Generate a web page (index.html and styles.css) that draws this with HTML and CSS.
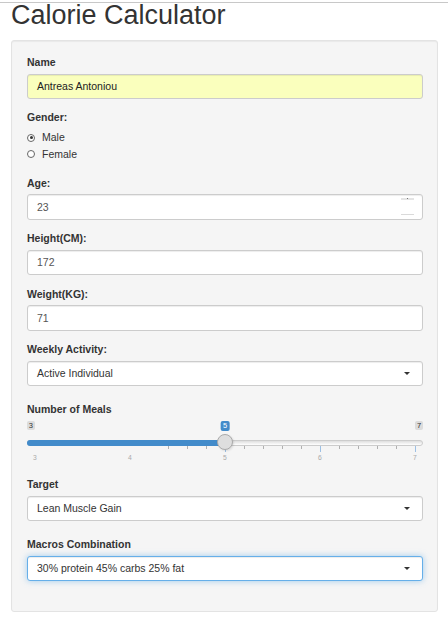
FILE: index.html
```html
<!DOCTYPE html>
<html>
<head>
<meta charset="utf-8">
<title>Calorie Calculator</title>
<link rel="stylesheet" href="styles.css">
</head>
<body>
<div class="page">
  <h1 class="title">Calorie Calculator</h1>
  <div class="well">
    <div class="group">
      <div class="label">Name</div>
      <div class="input autofill">Antreas Antoniou</div>
    </div>
    <div class="group">
      <div class="label">Gender:</div>
      <div class="options">
        <div class="radio"><span class="dot checked"></span><span>Male</span></div>
        <div class="radio"><span class="dot"></span><span>Female</span></div>
      </div>
    </div>
    <div class="group">
      <div class="label">Age:</div>
      <div class="input number">23<span class="spin-up"></span><span class="spin-down"></span></div>
    </div>
    <div class="group">
      <div class="label">Height(CM):</div>
      <div class="input">172</div>
    </div>
    <div class="group">
      <div class="label">Weight(KG):</div>
      <div class="input">71</div>
    </div>
    <div class="group">
      <div class="label">Weekly Activity:</div>
      <div class="select">Active Individual<span class="caret"></span></div>
    </div>
    <div class="group">
      <div class="label">Number of Meals</div>
      <div class="irs">
        <span class="irs-line"></span>
        <span class="irs-bar" style="width: calc(8px + (100% - 16px) * 0.5)"></span>
        <span class="irs-min">3</span>
        <span class="irs-max">7</span>
        <div class="irs-track">
          <span class="tick" style="left:35%"></span>
          <span class="tick" style="left:40%"></span>
          <span class="tick" style="left:45%"></span>
          <span class="tick major" style="left:50%"></span>
          <span class="tick" style="left:55%"></span>
          <span class="tick" style="left:60%"></span>
          <span class="tick" style="left:65%"></span>
          <span class="tick" style="left:70%"></span>
          <span class="tick major" style="left:75%"></span>
          <span class="tick" style="left:80%"></span>
          <span class="tick" style="left:85%"></span>
          <span class="tick" style="left:90%"></span>
          <span class="tick" style="left:95%"></span>
          <span class="tick major" style="left:100%"></span>
          <span class="gl" style="left:0%">3</span>
          <span class="gl" style="left:25%">4</span>
          <span class="gl" style="left:50%">5</span>
          <span class="gl" style="left:75%">6</span>
          <span class="gl" style="left:100%">7</span>
          <span class="irs-single" style="left:50%">5</span>
          <span class="irs-handle" style="left:50%"></span>
        </div>
      </div>
    </div>
    <div class="group">
      <div class="label">Target</div>
      <div class="select">Lean Muscle Gain<span class="caret"></span></div>
    </div>
    <div class="group">
      <div class="label">Macros Combination</div>
      <div class="select focus">30% protein 45% carbs 25% fat<span class="caret"></span></div>
    </div>
  </div>
</div>
</body>
</html>
```

FILE: styles.css
```css
* { box-sizing: border-box; }

body {
  margin: 0;
  font-family: "Liberation Sans", Arial, Helvetica, sans-serif;
  font-size: 10.5px;
  line-height: 15px;
  color: #333;
  background: #fff;
}

.page {
  margin-top: 2px;
  border-top: 1px solid #c8c8c8;
  padding: 0 10px 0 11px;
}

.title {
  margin: -2px 0 9px;
  font-size: 27px;
  line-height: 29.7px;
  font-weight: normal;
  color: #333;
}

.well {
  display: flex;
  flex-direction: column;
  background: #f5f5f5;
  border: 1px solid #e3e3e3;
  border-radius: 3px;
  padding: 14.25px 14px 14.25px 15px;
  box-shadow: inset 0 1px 1px rgba(0, 0, 0, 0.05);
}

.group { margin-bottom: 11.25px; }

.label {
  display: block;
  font-weight: bold;
  margin-bottom: 3.75px;
}

.input {
  position: relative;
  height: 25.5px;
  padding: 4.5px 9px;
  color: #555;
  background: #fff;
  border: 1px solid #ccc;
  border-radius: 3px;
  box-shadow: inset 0 1px 1px rgba(0, 0, 0, 0.075);
}

.input.autofill { background: #faffbd; color: #222; }

.spin-up {
  position: absolute;
  right: 8px;
  top: 2.5px;
  width: 13px;
  height: 2.5px;
  background: #e4e4e4;
}
.spin-up::after {
  content: "";
  position: absolute;
  left: 6px;
  top: 0.5px;
  width: 1px;
  height: 1px;
  background: #777;
}
.spin-down {
  position: absolute;
  right: 8px;
  top: 18.5px;
  width: 13px;
  height: 1.5px;
  background: #dadada;
}

.options { padding: 1px 0 2.5px; }

.radio {
  display: flex;
  align-items: center;
  height: 15px;
}
.radio + .radio { margin-top: 1.6px; }

.dot {
  position: relative;
  width: 8px;
  height: 8px;
  margin-right: 7px;
  border: 1px solid #666;
  border-radius: 50%;
  background: #fff;
}
.dot.checked::after {
  content: "";
  position: absolute;
  left: 1.5px;
  top: 1.5px;
  width: 3px;
  height: 3px;
  border-radius: 50%;
  background: #333;
}

.select {
  position: relative;
  height: 25.5px;
  padding: 4.5px 9px;
  color: #333;
  background: #fff;
  border: 1px solid #ccc;
  border-radius: 3px;
  box-shadow: inset 0 1px 1px rgba(0, 0, 0, 0.075);
}
.group:has(.select) { padding-bottom: 4.5px; }
.select.focus {
  border-color: #66afe9;
  box-shadow: inset 0 1px 1px rgba(0, 0, 0, 0.075), 0 0 6px rgba(102, 175, 233, 0.6);
}
.caret {
  position: absolute;
  right: 12.5px;
  top: 50%;
  margin-top: -1.75px;
  width: 0;
  height: 0;
  border-style: solid;
  border-width: 3.75px 3.5px 0 3.5px;
  border-color: #333 transparent transparent transparent;
}

/* slider */
.irs {
  position: relative;
  height: 45px;
}
.irs-line {
  position: absolute;
  left: 0;
  right: 0;
  top: 18.75px;
  height: 6px;
  border: 1px solid #ccc;
  border-radius: 12px;
  background: linear-gradient(#dedede, #fff);
}
.irs-bar {
  position: absolute;
  left: 0;
  top: 18.75px;
  height: 6px;
  background: #428bca;
  border-radius: 12px 0 0 12px;
}
.irs-min, .irs-max {
  position: absolute;
  top: 0;
  font-size: 7.5px;
  line-height: 9px;
  padding: 0 1.75px;
  color: #333;
  background: rgba(0, 0, 0, 0.1);
  border-radius: 2px;
}
.irs-min { left: 0; }
.irs-max { right: 0; }

.irs-track {
  position: absolute;
  left: 8px;
  right: 8px;
  top: 0;
  bottom: 0;
}
.irs-single {
  position: absolute;
  top: 0;
  transform: translateX(-50%);
  font-size: 7.5px;
  line-height: 10px;
  padding: 0 2.25px;
  color: #fff;
  background: #428bca;
  border-radius: 2px;
}
.irs-handle {
  position: absolute;
  top: 12.75px;
  width: 16.5px;
  height: 16.5px;
  margin-left: -8.25px;
  border-radius: 50%;
  background: #dedede;
  border: 1px solid #aaa;
  box-shadow: 1px 1px 2px rgba(0, 0, 0, 0.1);
}
.tick {
  position: absolute;
  top: 25.25px;
  width: 1px;
  height: 3px;
  margin-left: -0.5px;
  background: #b0b0b0;
}
.tick.major {
  height: 6px;
  background: #9dc0e4;
}
.gl {
  position: absolute;
  top: 33px;
  font-size: 6.75px;
  line-height: 8px;
  color: #aaa;
  transform: translateX(-50%);
}
```
